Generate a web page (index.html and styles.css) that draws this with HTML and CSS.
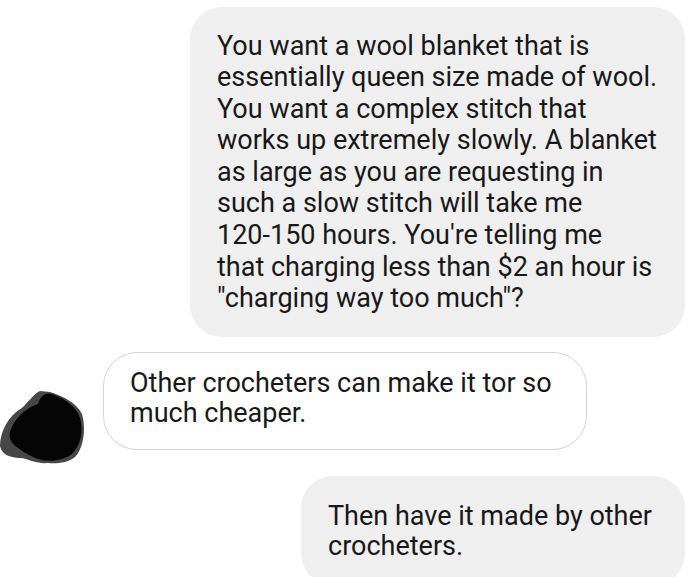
FILE: index.html
```html
<!DOCTYPE html>
<html lang="en">
  <head>
    <meta charset="UTF-8" />
    <meta name="viewport" content="width=device-width, initial-scale=1.0" />
    <title>Chat</title>
    <link rel="stylesheet" href="styles.css">
  </head>
  <body>
    <div class="thread">
      <div class="row row-out">
        <div class="bubble bubble-out bubble-long">
          You want a wool blanket that is essentially queen size made of wool.
          You want a complex stitch that works up extremely slowly. A blanket
          as large as you are requesting in such a slow stitch will take me
          <span class="nowrap">120-150</span> hours. You're telling me<br />that
          charging less than $2 an hour is "charging way too much"?
        </div>
      </div>

      <div class="row row-in">
        <!-- scribbled-out profile picture -->
        <svg class="avatar" width="84" height="76" viewBox="0 0 84 76">
          <path
            fill="#474747"
            d="M0 58 C0 44 8 28 22 20 C28 14 34 6 40 3 L50 4 C62 8 76 14 82 26 C86 40 84 58 76 68 C70 74 60 76 48 75 C38 76 30 72 22 70 C12 70 2 68 0 58 Z"
          />
          <path
            fill="#050505"
            d="M10 44 C14 30 26 20 38 16 C40 8 46 4 52 6 C64 10 76 18 80 30 C84 44 80 58 72 66 C64 72 52 74 42 72 C34 70 26 66 18 60 C12 56 8 50 10 44 Z"
          />
        </svg>
        <div class="bubble bubble-in">
          Other crocheters can make it tor so much cheaper.
        </div>
      </div>

      <div class="row row-out">
        <div class="bubble bubble-out bubble-short">
          Then have it made by other crocheters.
        </div>
      </div>
    </div>
  </body>
</html>
```

FILE: styles.css
```css
body {
  margin: 0;
  background: #fff;
  font-family: Roboto, "Noto Sans", sans-serif;
  color: #181818;
}
.thread {
  display: flex;
  flex-direction: column;
  padding: 7px 15px 0 0;
}
.row {
  display: flex;
}
.row-out {
  justify-content: flex-end;
}
.row-in {
  align-items: flex-start;
  gap: 19px;
  margin-top: 15px;
  margin-bottom: 12px;
}
.bubble {
  box-sizing: border-box;
  font-size: 27px;
  line-height: 31.6px;
}
.nowrap {
  white-space: nowrap;
}
.bubble-out {
  background: #efefef;
  border-radius: 32px;
}
.bubble-long {
  width: 495px;
  padding: 23.5px 21px 22.5px 27px;
}
.bubble-short {
  width: 384px;
  line-height: 30px;
  padding: 24.3px 20px 24px 27px;
}
.bubble-in {
  width: 484px;
  background: #fff;
  border: 1px solid #d4d4d4;
  border-radius: 34px;
  padding: 14.8px 15px 21px 26px;
  line-height: 30px;
}
.avatar {
  display: block;
  flex-shrink: 0;
  margin-top: 36px;
}
```
